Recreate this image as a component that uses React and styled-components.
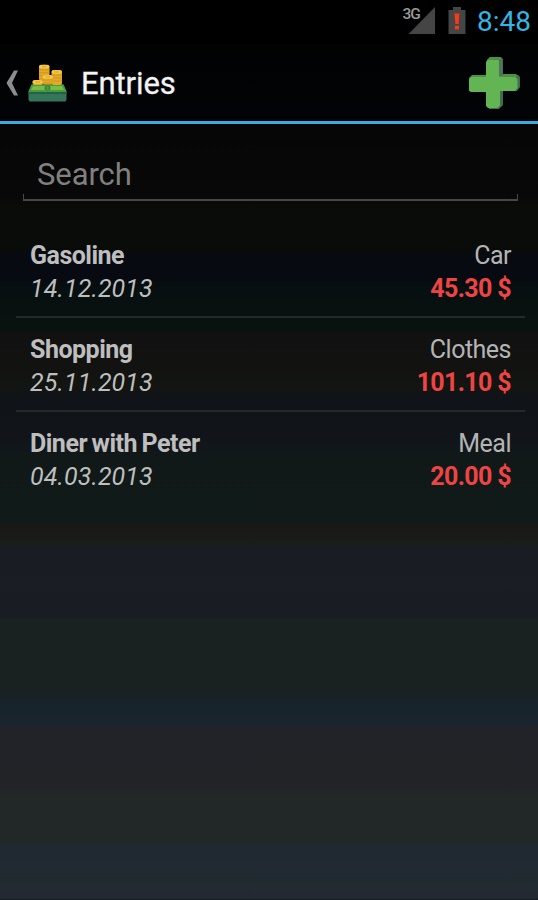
import React, { useState } from 'react';
import styled, { createGlobalStyle } from 'styled-components';

const App = () => {
  const [query, setQuery] = useState('');
  const entries = ENTRIES.filter((entry) =>
    entry.name.toLowerCase().includes(query.toLowerCase())
  );

  return (
    <>
      <GlobalStyle />
      <Screen>
        <StatusBar>
          <Signal />
          <Battery />
          <Clock>8:48</Clock>
        </StatusBar>
        <ActionBar>
          <BackButton aria-label="Back">
            <BackIcon />
            <MoneyIcon />
          </BackButton>
          <Title>Entries</Title>
          <AddButton aria-label="Add entry">
            <PlusIcon />
          </AddButton>
        </ActionBar>
        <SearchBox>
          <SearchInput
            placeholder="Search"
            value={query}
            onChange={(e) => setQuery(e.target.value)}
          />
          <SearchLine />
        </SearchBox>
        <EntryList>
          {entries.map((entry) => (
            <EntryItem key={entry.id}>
              <EntryRow>
                <EntryName>{entry.name}</EntryName>
                <Category>{entry.category}</Category>
              </EntryRow>
              <EntryRow>
                <EntryDate>{entry.date}</EntryDate>
                <Amount>{entry.amount} $</Amount>
              </EntryRow>
            </EntryItem>
          ))}
        </EntryList>
      </Screen>
    </>
  );
};

export default App;

const Signal = () => (
  <SignalWrap>
    <Network>3G</Network>
    <svg width="27" height="27" viewBox="0 0 27 27">
      <path d="M0.5 27L27 0V27Z" fill="#454545" />
    </svg>
  </SignalWrap>
);

const Battery = () => (
  <BatterySvg width="18" height="27" viewBox="0 0 18 27">
    <path d="M5 0H13V3H17.5V27H0.5V3H5Z" fill="#454545" />
    <path d="M6.5 6.5H11.5L10.6 17H7.4Z" fill="#f73a1c" />
    <rect x="7" y="18.8" width="4" height="3.6" fill="#f73a1c" />
  </BatterySvg>
);

const BackIcon = () => (
  <svg width="13" height="26" viewBox="0 0 13 26">
    <path d="M8 0.5H12L6 13L12 25.5H8L0.5 13Z" fill="#8d8d8d" />
  </svg>
);

const COINS = [
  { x: 23.5, y: 6, h: 15 },
  { x: 11, y: 0.8, h: 16 },
  { x: 14.5, y: 11, h: 9.5 },
  { x: 4.5, y: 16, h: 5 },
];

const MoneyIcon = () => (
  <MoneySvg width="39" height="38" viewBox="0 0 39 38">
    <path d="M3.5 20.5H35.5L38.5 27V35.5L37.5 37.5H1.5L0.5 35.5V27Z" fill="#34765a" />
    <path d="M3.5 20.5H35.5L38.5 28H0.5Z" fill="#4c9a40" />
    <path d="M5 22H34L36 26H3Z" fill="#74c044" />
    <path d="M0.5 28H38.5V30H0.5Z" fill="#25604b" />
    <ellipse cx="19.5" cy="24" rx="3" ry="2.7" fill="#3b8435" />
    <path d="M18.5 23.3H20.5M18.5 25H20.5" stroke="#74b943" strokeWidth="0.8" />
    {COINS.map(({ x, y, h }) => (
      <g key={x}>
        <rect x={x} y={y} width="10.5" height={h} rx="2" fill="#e3aa28" />
        {COIN_EDGES.filter((edge) => edge < h - 1).map((edge) => (
          <path
            key={edge}
            d={`M${x} ${y + edge}h10.5`}
            stroke="#c98c1e"
            strokeWidth="0.7"
          />
        ))}
        <ellipse cx={x + 5.25} cy={y + 1.9} rx="5.1" ry="1.9" fill="#f6cb48" />
        <path d={`M${x + 3} ${y + 2}h4.5`} stroke="#cf9422" strokeWidth="0.8" />
      </g>
    ))}
  </MoneySvg>
);

const PlusIcon = () => (
  <svg width="53" height="54" viewBox="0 0 53 54">
    <path
      d="M19 4L22 1H33L35 3V19H50L52 21V31L49 35H35V49L31 53H21Z"
      fill="#416e50"
    />
    <path
      d="M19 4L22 1H32L34 3L31 5V21H48L50 20L48 18H35V19L4 19L1 22V35L3 36H19Z"
      fill="#4d8f48"
    />
    <path
      d="M19.5 4H30L31 5V21H47L49.5 23V32L47 35H32V50L29 52H20L18 50V36H3L1 34V24L3 21H18V6Z"
      fill="#62b552"
    />
    <path d="M31 5.5L34.5 3.5V20H31Z" fill="#50745d" />
  </svg>
);

const GlobalStyle = createGlobalStyle`
  * {
    box-sizing: border-box;
  }

  body {
    margin: 0;
    background: #000;
    font-family: Roboto, 'Liberation Sans', sans-serif;
  }

  button {
    padding: 0;
    border: 0;
    background: none;
    cursor: pointer;
  }

  svg {
    display: block;
  }
`;

const Screen = styled.div`
  width: 100%;
  height: 900px;
  overflow: hidden;
  background: linear-gradient(
    #000 0,
    #010202 44px,
    #010306 118px,
    #060606 128px,
    #080808 196px,
    #0a0c09 206px,
    #0a0c09 245px,
    #070a10 258px,
    #070b11 280px,
    #071010 290px,
    #08120f 328px,
    #111111 334px,
    #121211 365px,
    #121511 385px,
    #101418 398px,
    #11151a 440px,
    #101918 458px,
    #101a18 524px,
    #191817 526px,
    #1a1d1a 543px,
    #191d23 550px,
    #1a1c24 616px,
    #192121 620px,
    #192121 690px,
    #17242b 702px,
    #1a242c 725px,
    #212328 728px,
    #212327 785px,
    #222828 797px,
    #222827 838px,
    #1f2932 850px,
    #222932 870px,
    #1e2a30 878px,
    #222a32 884px,
    #222932 898px,
    #17191f 900px
  );
`;

const StatusBar = styled.div`
  display: flex;
  justify-content: flex-end;
  height: 44px;
  padding: 7px 7px 0 0;
  background: #000;
`;

const SignalWrap = styled.div`
  display: flex;
  margin-right: 13px;
`;

const Network = styled.span`
  margin-right: -12px;
  color: #9a9a9a;
  font-size: 15.5px;
  font-weight: 500;
  line-height: 14px;
  letter-spacing: -0.9px;
`;

const BatterySvg = styled.svg`
  margin-right: 11px;
`;

const Clock = styled.span`
  color: #33b5e5;
  font-size: 28px;
  line-height: 30px;
`;

const ActionBar = styled.header`
  display: flex;
  align-items: center;
  height: 80px;
  padding: 1px 17px 0 6px;
  border-bottom: 3px solid #38ace0;
`;

const BackButton = styled.button`
  display: flex;
  align-items: center;
`;

const MoneySvg = styled.svg`
  margin-left: 9px;
`;

const Title = styled.h1`
  flex: 1;
  margin: 2px 0 0 14px;
  color: #f3f3f3;
  font-size: 31px;
  font-weight: 400;
  line-height: 40px;
  letter-spacing: -0.1px;
  -webkit-text-stroke: 0.3px #f3f3f3;
`;

const AddButton = styled.button`
  width: 53px;
  height: 54px;
`;

const SearchBox = styled.div`
  margin: 24px 20px 0 23px;
`;

const SearchInput = styled.input`
  display: block;
  width: 100%;
  height: 46px;
  padding: 6px 14px 0;
  border: 0;
  outline: 0;
  background: none;
  color: #f3f3f3;
  font-family: inherit;
  font-size: 31px;
  letter-spacing: -0.1px;

  &::placeholder {
    color: #808080;
    opacity: 1;
  }
`;

const SearchLine = styled.div`
  height: 7px;
  border: 1px solid #484848;
  border-top: 0;
  border-bottom-width: 2px;
`;

const EntryList = styled.ul`
  margin: 23px 13px 0 16px;
  padding: 0;
  list-style: none;
`;

const EntryItem = styled.li`
  height: 94px;
  padding: 15px 14px 0;
  border-bottom: 2px solid #242929;

  &:last-child {
    border-bottom: 0;
  }
`;

const EntryRow = styled.div`
  display: flex;
  justify-content: space-between;
  height: 33px;
  color: #bebebe;
  font-size: 25px;
  line-height: 34px;
`;

const EntryName = styled.span`
  font-weight: 700;
  letter-spacing: -0.5px;
  word-spacing: -1.2px;
`;

const Category = styled.span`
  color: #b4b4b4;
  letter-spacing: -0.5px;
`;

const EntryDate = styled.span`
  font-style: italic;
  letter-spacing: 0.1px;
`;

const Amount = styled.span`
  color: #ef4444;
  font-weight: 700;
  letter-spacing: -0.65px;
`;

const COIN_EDGES = [5, 8, 11, 14];

const ENTRIES = [
  {
    id: 1,
    name: 'Gasoline',
    date: '14.12.2013',
    category: 'Car',
    amount: '45.30',
  },
  {
    id: 2,
    name: 'Shopping',
    date: '25.11.2013',
    category: 'Clothes',
    amount: '101.10',
  },
  {
    id: 3,
    name: 'Diner with Peter',
    date: '04.03.2013',
    category: 'Meal',
    amount: '20.00',
  },
];
